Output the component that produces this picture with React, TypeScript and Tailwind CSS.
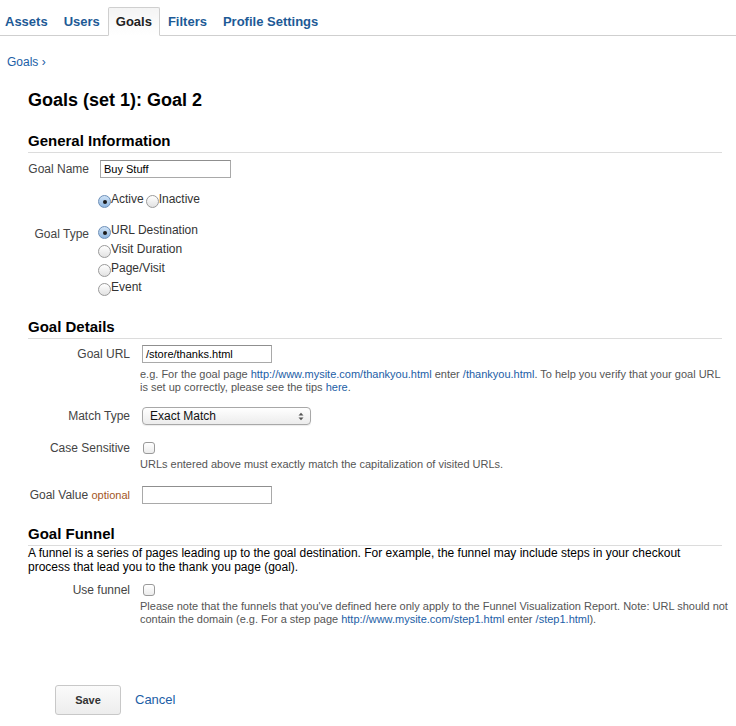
import React from "react";

const font = { fontFamily: '"Liberation Sans", Arial, Helvetica, sans-serif' };

function Radio({ checked }: { checked?: boolean }) {
  return (
    <span
      className={
        "inline-flex items-center justify-center w-[13px] h-[13px] rounded-full border shrink-0 " +
        (checked
          ? "border-[#6d8fb8] bg-gradient-to-b from-[#cfe3f7] to-[#8fb6e0]"
          : "border-[#9a9a9a] bg-gradient-to-b from-[#ffffff] to-[#e2e2e2]")
      }
    >
      {checked && <span className="block w-[4px] h-[4px] rounded-full bg-[#1a1a1a]" />}
    </span>
  );
}

function Checkbox() {
  return (
    <span className="inline-block w-[12px] h-[12px] rounded-[3px] border border-[#9a9a9a] bg-gradient-to-b from-white to-[#ececec]" />
  );
}

function TextInput({ value, w }: { value?: string; w: string }) {
  return (
    <div
      className={
        w +
        " h-[18px] border border-[#a9a9a9] bg-white text-[11px] text-black leading-[16px] px-[3px] border-t-[#8f8f8f]"
      }
    >
      {value}
    </div>
  );
}

const Link = ({ children }: { children: React.ReactNode }) => (
  <span className="text-[#1c5ea6]">{children}</span>
);

export default function App() {
  return (
    <div style={font} className="w-[736px] h-[726px] bg-white text-[12px] leading-[14px] text-[#222] overflow-hidden">
      {/* Tabs */}
      <div className="h-[36px] border-b border-[#cfcfcf] flex items-end pl-0 ml-[-3px]">
        {["Assets", "Users", "Goals", "Filters", "Profile Settings"].map((t) => (
          <div
            key={t}
            className={
              "h-[29px] px-[7px] border flex items-center text-[13px] font-bold mb-[-1px] " +
              (t === "Goals"
                ? "border-[#cfcfcf] border-b-white bg-gradient-to-b from-[#f4f4f4] to-white text-[#222] rounded-t-[2px]"
                : "border-transparent text-[#1d5a96]")
            }
          >
            {t}
          </div>
        ))}
      </div>

      {/* Breadcrumb */}
      <div className="mt-[19px] pl-[7px] leading-[14px] text-[#1c5ea6]">Goals ›</div>

      <div className="pl-[28px] pr-[14px]">
        <h1 className="mt-[20px] text-[18px] font-bold leading-[22px] text-black">Goals (set 1): Goal 2</h1>

        {/* General Information */}
        <div className="mt-[21px] border-b border-[#dcdcdc] pb-[2px]">
          <h2 className="text-[15px] font-bold leading-[18px] text-black">General Information</h2>
        </div>

        <div className="mt-[7px] flex items-center">
          <div className="w-[62px] text-right text-[#444] whitespace-nowrap ml-[-1px]">Goal Name</div>
          <div className="ml-[11px]">
            <TextInput value="Buy Stuff" w="w-[131px]" />
          </div>
        </div>

        <div className="mt-[17px] flex items-center ml-[70px] text-[12px] text-[#333] leading-[13px]">
          <Radio checked />
          <span className="mr-[2px] mt-[-4px]">Active</span>
          <Radio />
          <span className="mt-[-4px]">Inactive</span>
        </div>

        <div className="mt-[18px] flex">
          <div className="w-[61px] text-right text-[#444] whitespace-nowrap pt-[1px]">Goal Type</div>
          <div className="ml-[9px] flex flex-col gap-[6px] text-[#333] leading-[13px]">
            {["URL Destination", "Visit Duration", "Page/Visit", "Event"].map((t, i) => (
              <div key={t} className="flex items-center">
                <Radio checked={i === 0} />
                <span className="mt-[-4px]">{t}</span>
              </div>
            ))}
          </div>
        </div>

        {/* Goal Details */}
        <div className="mt-[22px] border-b border-[#dcdcdc] pb-[2px]">
          <h2 className="text-[15px] font-bold leading-[18px] text-black">Goal Details</h2>
        </div>

        <div className="mt-[6px] flex items-center">
          <div className="w-[102px] text-right text-[#444] whitespace-nowrap">Goal URL</div>
          <div className="ml-[12px]">
            <TextInput value="/store/thanks.html" w="w-[130px]" />
          </div>
        </div>
        <div className="ml-[112px] mt-[5px] w-[584px] text-[11px] leading-[13px] text-[#555]">
          e.g. For the goal page <Link>http://www.mysite.com/thankyou.html</Link> enter{" "}
          <Link>/thankyou.html</Link>. To help you verify that your goal URL is set up correctly, please see the tips{" "}
          <Link>here</Link>.
        </div>

        <div className="mt-[13px] flex items-center">
          <div className="w-[102px] text-right text-[#444] whitespace-nowrap">Match Type</div>
          <div className="ml-[12px] w-[169px] h-[18px] rounded-[4px] border border-[#a8a8a8] bg-gradient-to-b from-white to-[#ececec] flex items-center justify-between pl-[7px] pr-[6px] text-[12px] text-[#111] shadow-[0_1px_1px_rgba(0,0,0,0.08)]">
            <span>Exact Match</span>
            <svg width="6" height="9" viewBox="0 0 6 9">
              <path d="M0.5 3.5 L3 0.8 L5.5 3.5 Z" fill="#555" />
              <path d="M0.5 5.5 L3 8.2 L5.5 5.5 Z" fill="#555" />
            </svg>
          </div>
        </div>

        <div className="mt-[16px] flex items-center">
          <div className="w-[102px] text-right text-[#444] whitespace-nowrap">Case Sensitive</div>
          <div className="ml-[13px] flex items-center">
            <Checkbox />
          </div>
        </div>
        <div className="ml-[112px] mt-[3px] text-[11px] leading-[13px] text-[#555]">
          URLs entered above must exactly match the capitalization of visited URLs.
        </div>

        <div className="mt-[15px] flex items-center">
          <div className="w-[102px] text-right text-[#444] whitespace-nowrap">
            Goal Value <span className="text-[11px] text-[#a3561e]">optional</span>
          </div>
          <div className="ml-[12px]">
            <TextInput w="w-[130px]" />
          </div>
        </div>

        {/* Goal Funnel */}
        <div className="mt-[21px] border-b border-[#dcdcdc] pb-[2px]">
          <h2 className="text-[15px] font-bold leading-[18px] text-black">Goal Funnel</h2>
        </div>
        <p className="text-[12px] leading-[14px] text-black">
          A funnel is a series of pages leading up to the goal destination. For example, the funnel may include steps in
          your checkout process that lead you to the thank you page (goal).
        </p>

        <div className="mt-[9px] flex items-center">
          <div className="w-[102px] text-right text-[#444] whitespace-nowrap">Use funnel</div>
          <div className="ml-[13px] flex items-center">
            <Checkbox />
          </div>
        </div>
        <div className="ml-[112px] mt-[3px] w-[594px] text-[11px] leading-[13px] text-[#555]">
          Please note that the funnels that you've defined here only apply to the Funnel Visualization Report. Note: URL
          should not contain the domain (e.g. For a step page <Link>http://www.mysite.com/step1.html</Link> enter{" "}
          <Link>/step1.html</Link>).
        </div>

        <div className="mt-[59px] flex items-center ml-[27px]">
          <div className="w-[66px] h-[30px] rounded-[3px] border border-[#c8c8c8] bg-gradient-to-b from-[#fbfbfb] to-[#ededed] flex items-center justify-center text-[11px] font-bold text-[#333]">
            Save
          </div>
          <span className="ml-[14px] text-[13px] text-[#1c5ea6]">Cancel</span>
        </div>
      </div>
    </div>
  );
}
